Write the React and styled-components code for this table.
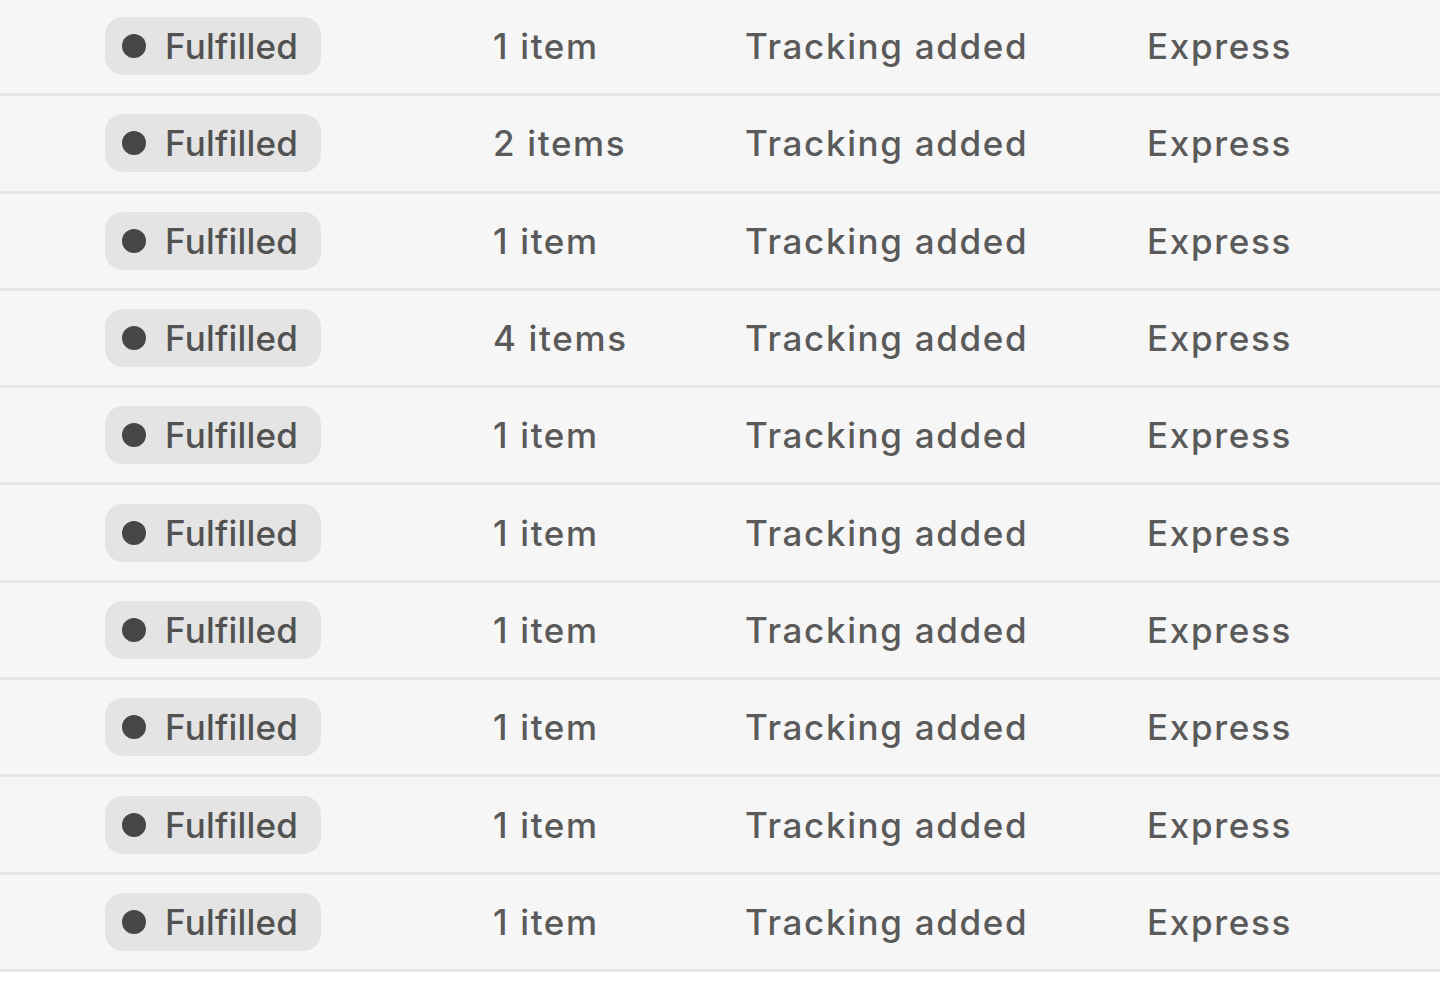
import React from 'react'
import styled, { createGlobalStyle } from 'styled-components'

const GlobalStyle = createGlobalStyle`
  html, body {
    margin: 0;
    padding: 0;
    background: #ffffff;
  }
  body {
    font-family: Inter, "Noto Sans", "Liberation Sans", sans-serif;
    -webkit-font-smoothing: antialiased;
  }
`

const orders = [
  { items: 1 },
  { items: 2 },
  { items: 1 },
  { items: 4 },
  { items: 1 },
  { items: 1 },
  { items: 1 },
  { items: 1 },
  { items: 1 },
  { items: 1 },
]

export default function App() {
  return (
    <>
      <GlobalStyle />
      <Table>
        {orders.map((order, i) => (
          <Row key={i}>
            <Cell>
              <Badge>
                <Dot />
                Fulfilled
              </Badge>
            </Cell>
            <Cell>{order.items === 1 ? '1 item' : `${order.items} items`}</Cell>
            <Cell>Tracking added</Cell>
            <Cell>Express</Cell>
          </Row>
        ))}
      </Table>
    </>
  )
}

const Table = styled.div`
  display: flex;
  flex-direction: column;
  margin-top: -1px;
  background: #ffffff;
`

const Row = styled.div`
  display: grid;
  grid-template-columns: 388px 252px 402px 1fr;
  align-items: center;
  box-sizing: border-box;
  height: 97.3px;
  padding-left: 105px;
  background: #f6f6f6;
  border-bottom: 3px solid #e6e6e6;
`

const Cell = styled.div`
  display: flex;
  align-items: center;
  font-size: 35px;
  font-weight: 500;
  letter-spacing: 1.65px;
  color: #5a5a5a;
  white-space: nowrap;
`

const Badge = styled.span`
  display: inline-flex;
  align-items: center;
  gap: 19px;
  height: 58px;
  box-sizing: border-box;
  padding: 0 23px 0 17px;
  border-radius: 18px;
  background: #e4e4e4;
  color: #525252;
  font-size: 35px;
  font-weight: 500;
  letter-spacing: 0.2px;
`

const Dot = styled.span`
  width: 24px;
  height: 24px;
  border-radius: 50%;
  background: #464646;
`
